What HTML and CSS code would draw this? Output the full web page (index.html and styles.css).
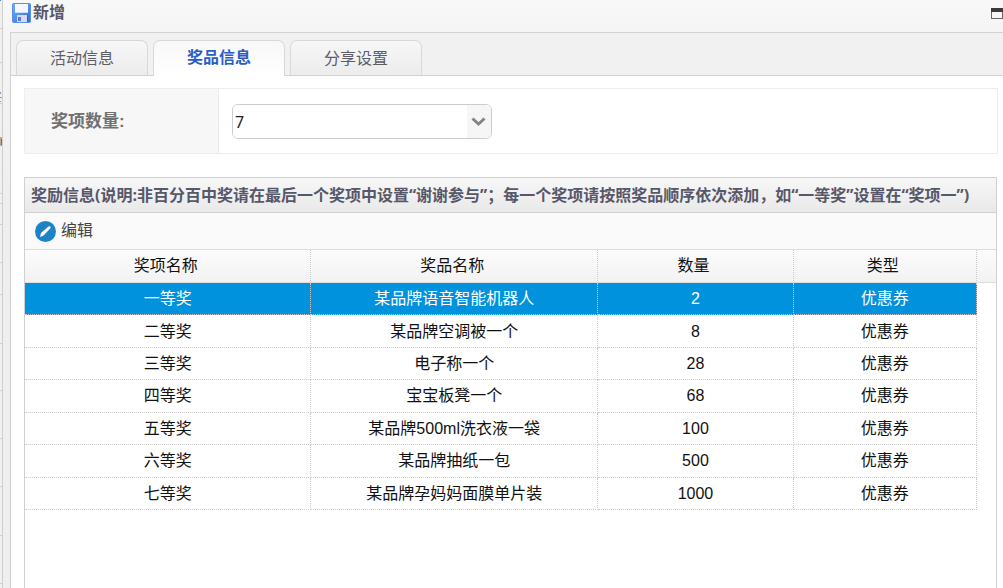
FILE: index.html
```html
<!DOCTYPE html>
<html lang="zh-CN">
<head>
<meta charset="utf-8">
<title>新增</title>
<link rel="stylesheet" href="styles.css">
</head>
<body>
<div class="screen">
  <svg class="backdrop" width="2" height="588" viewBox="0 0 2 588" aria-hidden="true">
    <path d="M0 28.500h2M0 62.500h2M0 103.500h2M0 193.500h2M0 203.500h2M0 224.500h2M0 262.500h2M0 294.500h2M0 343.500h2M0 390.500h2M0 438.500h2M0 486.500h2M0 535.500h2M0 583.500h2" stroke="#cfcfcf"/>
    <path d="M0 92h1v2h-1zM0 97h2v1h-2zM0 101h1v1h-1z" fill="#7f9cc4"/>
    <path d="M0 0h1v1h-1z" fill="#4d86c6"/>
    <path d="M0 137h2v9h-2z" fill="#c9a58a"/><path d="M1 139h1v6h-1z" fill="#7b6a62"/>
  </svg>
  <section class="window">
    <header class="titlebar">
      <svg class="save-icon" width="20" height="20" viewBox="0 0 20 20" aria-hidden="true">
        <defs><linearGradient id="disk" x1="0" y1="0" x2="1" y2="1"><stop offset="0" stop-color="#6fb0f2"/><stop offset="1" stop-color="#2f6fe0"/></linearGradient></defs>
        <rect x="0.500" y="0.500" width="18" height="19" rx="1" fill="url(#disk)" stroke="#5a92e2"/>
        <rect x="3" y="1" width="13" height="9" fill="#f4f7ff"/>
        <path d="M3 9.500h13" stroke="#cddcf8"/>
        <rect x="5" y="12" width="10" height="7" fill="#d7d9ef"/>
        <rect x="6" y="14" width="3" height="4" fill="#5c74d8"/>
        <path d="M15.500 12v7" stroke="#2f66cc"/>
      </svg>
      <h1 class="title">新增</h1>
      <button class="maximize" type="button" aria-label="最大化">
        <svg width="12" height="11" viewBox="0 0 12 11" aria-hidden="true">
          <rect x="0.500" y="0.500" width="11" height="10" fill="#f6f6f6" stroke="#666"/>
          <path d="M0 0h12v4h-12z" fill="#3a3a3a"/>
        </svg>
      </button>
    </header>
    <main class="content">
      <nav class="tabs" role="tablist">
        <button class="tab" type="button" role="tab">活动信息</button>
        <button class="tab tab-active" type="button" role="tab" aria-selected="true">奖品信息</button>
        <button class="tab" type="button" role="tab">分享设置</button>
      </nav>
      <div class="page">
        <form class="form-row">
          <label class="form-label" for="prize-count">奖项数量:</label>
          <div class="form-field">
            <div class="combo">
              <select class="combo-select" id="prize-count"><option>7</option></select>
              <svg class="combo-arrow" width="24" height="33" viewBox="0 0 24 33" aria-hidden="true">
                <path d="M0 0h24v33h-24z" fill="#f6f6f6"/>
                <path d="M5.500 13.500l6 5.500 6-5.500" fill="none" stroke="#858585" stroke-width="3"/>
              </svg>
            </div>
          </div>
        </form>
        <section class="panel">
          <h2 class="panel-title">奖励信息(说明:非百分百中奖请在最后一个奖项中设置“谢谢参与”；每一个奖项请按照奖品顺序依次添加，如“一等奖”设置在“奖项一”)</h2>
          <div class="toolbar">
            <button class="edit" type="button">
              <svg width="21" height="21" viewBox="0 0 21 21" aria-hidden="true">
                <circle cx="10.500" cy="10.500" r="10.500" fill="#1d82c6"/>
                <path d="M5 16l1-4 7.500-6.500q1.500-0.700 2 0.200t-0.300 1.900l-6.700 7z" fill="#fff"/>
              </svg>
              编辑
            </button>
          </div>
          <table class="grid">
            <colgroup><col class="col-level"><col class="col-name"><col class="col-count"><col class="col-type"><col></colgroup>
            <thead><tr><th>奖项名称</th><th>奖品名称</th><th>数量</th><th>类型</th><td></td></tr></thead>
            <tbody>
              <tr class="selected"><td>一等奖</td><td>某品牌语音智能机器人</td><td>2</td><td>优惠券</td></tr>
              <tr><td>二等奖</td><td>某品牌空调被一个</td><td>8</td><td>优惠券</td></tr>
              <tr><td>三等奖</td><td>电子称一个</td><td>28</td><td>优惠券</td></tr>
              <tr><td>四等奖</td><td>宝宝板凳一个</td><td>68</td><td>优惠券</td></tr>
              <tr><td>五等奖</td><td>某品牌500ml洗衣液一袋</td><td>100</td><td>优惠券</td></tr>
              <tr><td>六等奖</td><td>某品牌抽纸一包</td><td>500</td><td>优惠券</td></tr>
              <tr><td>七等奖</td><td>某品牌孕妈妈面膜单片装</td><td>1000</td><td>优惠券</td></tr>
            </tbody>
          </table>
        </section>
      </div>
    </main>
  </section>
</div>
</body>
</html>
```
FILE: styles.css
```css
* { box-sizing: border-box; }
body {
  margin: 0;
  overflow: hidden;
  background: #fff;
  color: #111;
  font-family: "Liberation Sans", "Noto Sans CJK SC", sans-serif;
  font-size: 16px;
  line-height: 24px;
}
h1, h2 { margin: 0; font-size: 16px; }
button, select { margin: 0; font: inherit; }
.screen { display: flex; min-height: 100vh; background: #f0f0f0; }
.backdrop { flex: none; }
.window {
  flex: 1;
  min-width: 0;
  display: flex;
  flex-direction: column;
  padding-left: 7px;
  border-left: 1px solid #cfcfcf;
  background: linear-gradient(#f8f8f8, #f5f5f5 32px, #eeeeee 200px);
}
.titlebar {
  display: flex;
  align-items: center;
  gap: 1px;
  height: 32px;
  padding: 0 0 6px 2px;
}
.title { flex: 1; color: #57576a; }
.maximize { display: flex; padding: 0; border: 0; background: none; }
.content {
  flex: 1;
  display: flex;
  flex-direction: column;
  border: solid #d2d2d2;
  border-width: 1px 0 0 1px;
  background: #fff;
}
.tabs {
  display: flex;
  gap: 5px;
  height: 43px;
  padding: 7px 0 0 5px;
  border-bottom: 1px solid #d2d2d2;
  background: #f1f1f1;
}
.tab {
  width: 132px;
  padding: 2px 0 0;
  border: 1px solid #d8d8d8;
  border-bottom: 0;
  border-radius: 7px 7px 0 0;
  background: linear-gradient(#f7f7f7, #ececec);
  color: #5d5d68;
}
.tab-active {
  margin-bottom: -1px;
  padding: 0 0 1px;
  background: linear-gradient(#f8f8f8, #fff);
  color: #2a5dc4;
  font-weight: bold;
}
.page { flex: 1; display: flex; flex-direction: column; gap: 23px; padding: 12px 5px 0 13px; }
.form-row { display: flex; height: 66px; border: 1px solid #ededed; }
.form-label {
  width: 194px;
  padding: 21px 0 0 26px;
  border-right: 1px solid #ededed;
  background: #f7f7f7;
  color: #707070;
  font-size: 17px;
  font-weight: bold;
}
.form-field { padding: 15px 13px; }
.combo {
  display: flex;
  position: relative;
  width: 260px;
  height: 35px;
  border: 1px solid #ccc;
  border-radius: 6px;
  overflow: hidden;
}
.combo-select {
  flex: 1;
  padding: 0 2px;
  border: 0;
  appearance: none;
  background: #fff;
  color: #222;
  font-family: "Noto Sans", sans-serif;
}
.combo-arrow { position: absolute; top: 0; right: 0; pointer-events: none; }
.panel { flex: 1; margin-right: 1px; border: solid #d0d0d0; border-width: 1px 1px 0; }
.panel-title {
  height: 35px;
  padding: 5px 6px;
  border-bottom: 1px solid #d0d0d0;
  background: linear-gradient(#f7f7f7, #e9e9e9);
  color: #57576a;
  font-family: "Open Sans", "Noto Sans CJK SC", sans-serif;
  white-space: nowrap;
}
.toolbar {
  display: flex;
  height: 37px;
  padding: 0 10px;
  border-bottom: 1px solid #ddd;
  background: #fafafa;
}
.edit {
  display: flex;
  align-items: center;
  gap: 5px;
  padding: 0;
  border: 0;
  background: none;
  color: #444;
}
.grid { width: 100%; height: 260px; table-layout: fixed; border-collapse: separate; border-spacing: 0; }
.col-level, .col-name { width: 29.5%; }
.col-count { width: 20.2%; }
.col-type { width: 18.8%; }
.grid th, .grid td { padding: 0; text-align: center; font-weight: normal; line-height: 24px; }
.grid thead th, .grid thead td {
  height: 33px;
  border-bottom: 1px solid #ddd;
  background: linear-gradient(#fcfcfc, #f2f2f2);
}
.grid thead th { padding-right: 4px; border-right: 1px dotted #ccc; }
.grid tbody td { padding-top: 1px; border: dotted #ccc; border-width: 0 1px 1px 0; }
.grid .selected td { background: #0092dc; color: #fff; }
```
